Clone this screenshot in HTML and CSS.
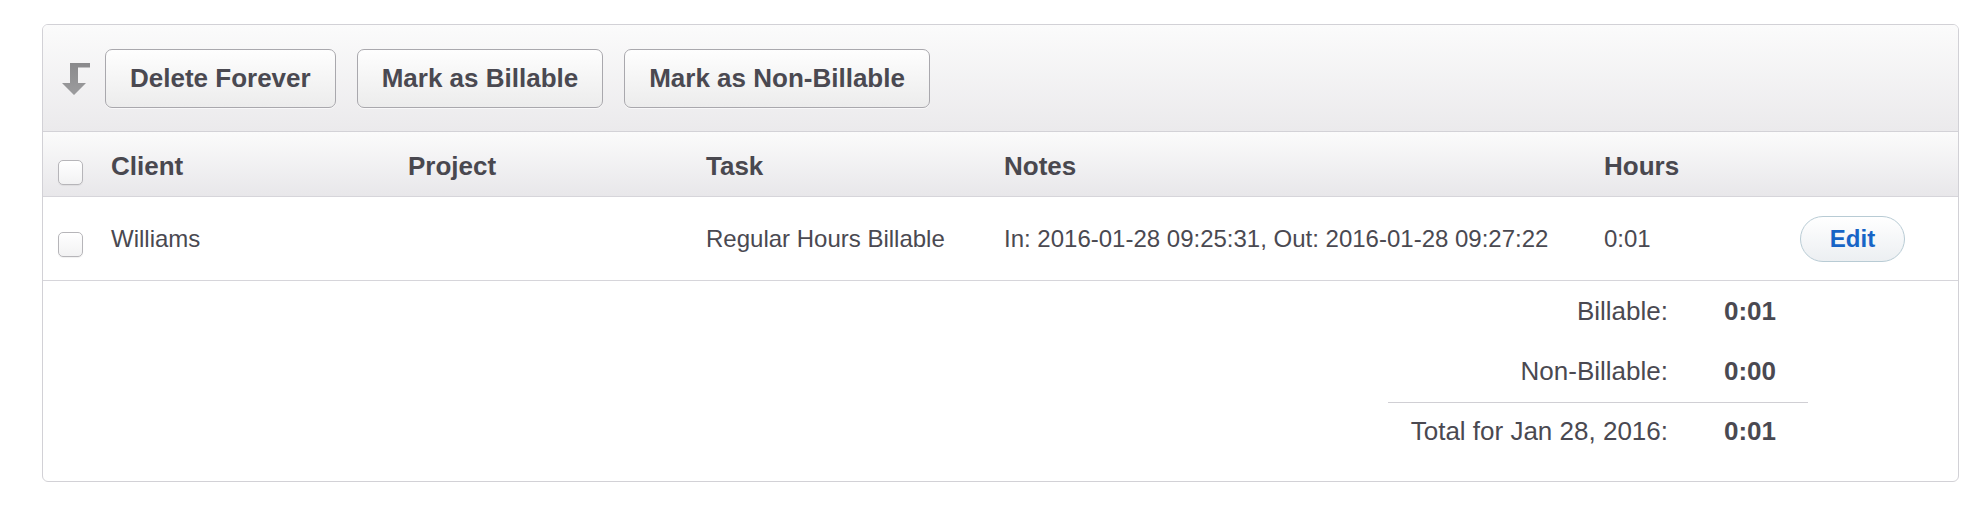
FILE: index.html
```html
<!DOCTYPE html>
<html>
<head>
<meta charset="utf-8">
<link rel="stylesheet" href="styles.css">
</head>
<body>
<div class="card">
  <div class="toolbar">
    <svg class="bulk-icon" width="28" height="32" viewBox="0 0 28 32">
      <defs>
        <linearGradient id="ig" x1="0" y1="0" x2="0" y2="1">
          <stop offset="0" stop-color="#8a8a8c"/>
          <stop offset="1" stop-color="#9c9c9e"/>
        </linearGradient>
      </defs>
      <path d="M8 0 H28 V4.5 H16 V20 H24 L12 32 L0 20 H8 Z" fill="url(#ig)"/>
    </svg>
    <button class="btn">Delete Forever</button>
    <button class="btn">Mark as Billable</button>
    <button class="btn">Mark as Non-Billable</button>
  </div>
  <div class="row head">
    <div class="cell"><input type="checkbox" class="cb"></div>
    <div class="cell">Client</div>
    <div class="cell">Project</div>
    <div class="cell">Task</div>
    <div class="cell">Notes</div>
    <div class="cell">Hours</div>
    <div class="cell"></div>
  </div>
  <div class="row entry">
    <div class="cell"><input type="checkbox" class="cb"></div>
    <div class="cell">Williams</div>
    <div class="cell"></div>
    <div class="cell">Regular Hours Billable</div>
    <div class="cell">In: 2016-01-28 09:25:31, Out: 2016-01-28 09:27:22</div>
    <div class="cell">0:01</div>
    <div class="cell"><button class="edit">Edit</button></div>
  </div>
  <div class="summary">
    <div class="sum-block">
      <div class="sum-row first"><span class="lbl">Billable:</span><span class="val">0:01</span></div>
      <div class="sum-row second"><span class="lbl">Non-Billable:</span><span class="val">0:00</span></div>
      <div class="sum-row total"><span class="lbl">Total for Jan 28, 2016:</span><span class="val">0:01</span></div>
    </div>
  </div>
</div>
</body>
</html>
```

FILE: styles.css
```css
html, body {
  margin: 0;
  padding: 0;
  background: #ffffff;
}
body {
  font-family: "Liberation Sans", Arial, Helvetica, sans-serif;
  color: #4a4951;
}
.card {
  margin: 24px 0 0 42px;
  width: 1917px;
  box-sizing: border-box;
  border: 1px solid #d2d1d6;
  border-radius: 6px;
  overflow: hidden;
  background: #ffffff;
}
.toolbar {
  height: 106px;
  border-bottom: 1px solid #d3d2d7;
  background: linear-gradient(#fbfbfb, #ebeaec);
  display: flex;
  align-items: center;
  padding-left: 19px;
  gap: 21px;
}
.bulk-icon {
  display: block;
  margin-right: -6px;
  margin-top: 2px;
}
.btn {
  height: 59px;
  box-sizing: border-box;
  padding: 0 24px;
  border: 1px solid #a9a8ad;
  border-radius: 7px;
  background: linear-gradient(#fefefe, #ececec);
  font-family: "Liberation Sans", Arial, Helvetica, sans-serif;
  font-weight: bold;
  font-size: 26px;
  color: #4a4951;
  box-shadow: 0 1px 0 rgba(255,255,255,0.6);
}
.row {
  display: grid;
  grid-template-columns: 68px 297px 298px 298px 600px 196px 1fr;
  align-items: center;
  box-sizing: border-box;
  border-bottom: 1px solid #d6d5da;
}
.cell {
  white-space: nowrap;
}
.cell:first-child {
  padding-left: 15px;
}
.head {
  height: 65px;
  padding-top: 4px;
  background: linear-gradient(#fbfbfb, #e8e7ea);
  font-weight: bold;
  font-size: 26px;
  color: #49484f;
}
.entry {
  height: 84px;
  font-size: 24px;
}
.cb {
  appearance: none;
  -webkit-appearance: none;
  display: block;
  width: 25px;
  height: 25px;
  margin: 12px 0 0 0;
  box-sizing: border-box;
  border: 1px solid #b6b5b9;
  border-radius: 5px;
  background: linear-gradient(#ffffff, #f2f2f3);
  box-shadow: 0 1px 1px rgba(0,0,0,0.06);
}
.edit {
  display: block;
  width: 105px;
  height: 46px;
  box-sizing: border-box;
  border: 1px solid #b8cbd4;
  border-radius: 23px;
  background: linear-gradient(#ffffff, #eceff2);
  font-family: "Liberation Sans", Arial, Helvetica, sans-serif;
  font-weight: bold;
  font-size: 24px;
  color: #1764c6;
  padding: 0;
}
.summary {
  display: flex;
  justify-content: flex-end;
  padding-right: 150px;
  font-size: 26px;
}
.sum-block {
  width: 420px;
  display: flex;
  flex-direction: column;
}
.sum-row {
  display: grid;
  grid-template-columns: 280px 84px;
  column-gap: 56px;
  line-height: 28px;
}
.sum-row .lbl {
  text-align: right;
}
.sum-row .val {
  font-weight: bold;
}
.sum-row.first {
  padding: 16px 0;
}
.sum-row.second {
  padding: 16px 0 17px;
  border-bottom: 1px solid #d0cfd4;
}
.sum-row.total {
  padding: 14px 0 36px;
}
```
